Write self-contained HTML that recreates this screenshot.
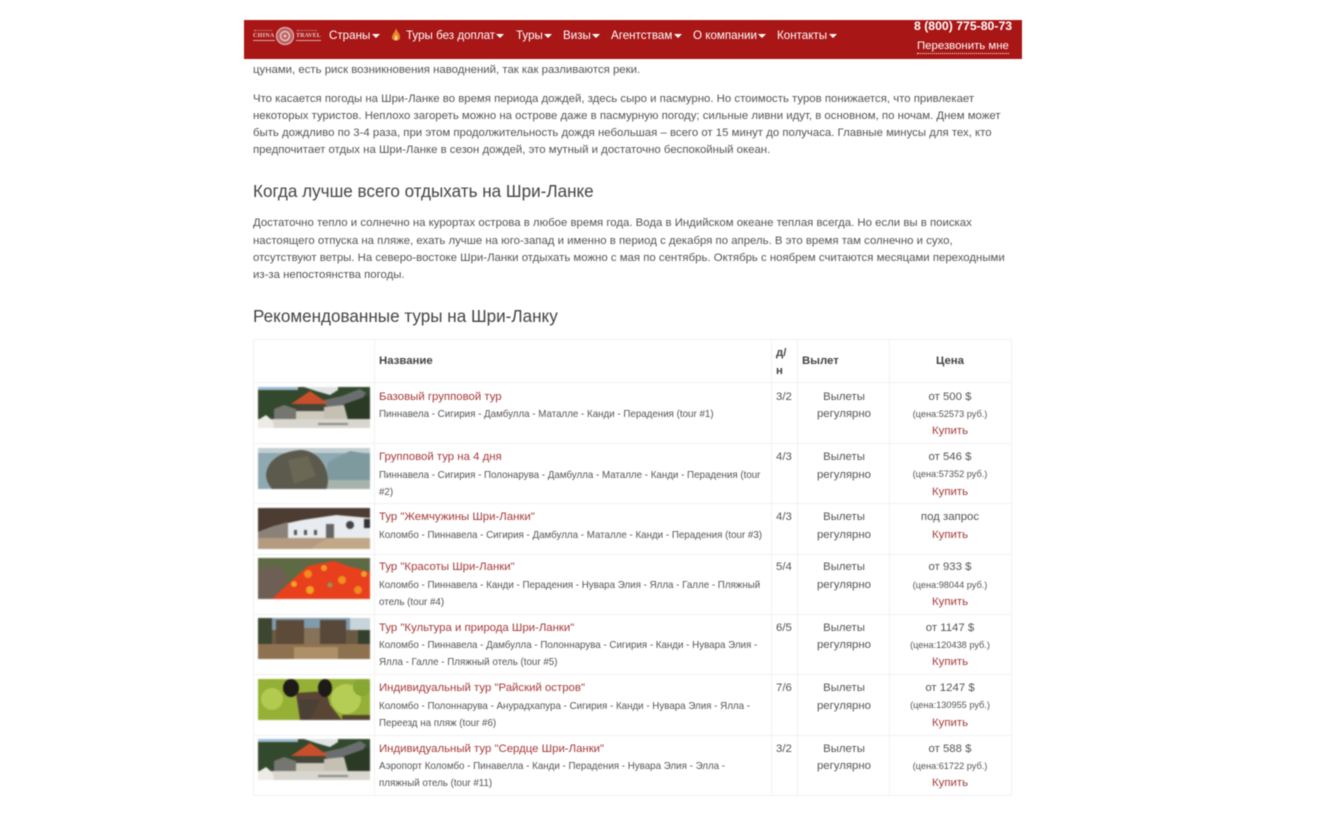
<!DOCTYPE html>
<html lang="ru"><head><meta charset="utf-8"><title>Шри-Ланка</title>
<style>
html,body{margin:0;padding:0;background:#fff}
#p{position:relative;width:1340px;height:818px;overflow:hidden;font-family:"Liberation Sans",sans-serif;color:#555;font-size:11.4px;filter:blur(.45px)}
.t{position:absolute;white-space:nowrap;line-height:18px;margin-top:1px}
.h{font-size:17.1px;color:#444;margin-top:0}
.s{font-size:9.78px}
.a{color:#a5393a}
.c{transform:translateX(-50%)}
.b{font-weight:bold;color:#444;font-size:11.4px}
.m{font-size:9.2px;margin-top:0}
.n{color:#fff;font-size:11.6px;top:26px}
.k{position:absolute;top:34px;width:0;height:0;border:4px solid transparent;border-top-color:#fff;border-bottom:0}
.l{position:absolute;background:#f2f2f2}
svg.i{position:absolute;left:258px;width:112px;height:41px;filter:blur(.4px)}
</style></head><body><div id="p">
<div style="position:absolute;left:244px;top:20px;width:778px;height:39px;background:#a81616"></div>
<div style="position:absolute;left:254px;top:30px;width:18px;height:1px;border-top:1px dotted #d8a8a8"></div>
<div style="position:absolute;left:297px;top:30px;width:20px;height:1px;border-top:1px dotted #d8a8a8"></div>
<div class="t" style="left:253px;top:33px;margin-top:0;color:#e8cfcf;font:bold 6px/7px 'Liberation Serif',serif;letter-spacing:.3px;border-bottom:1px solid #d8a8a8">CHINA</div>
<div class="t" style="left:296px;top:33px;margin-top:0;color:#e8cfcf;font:bold 6px/7px 'Liberation Serif',serif;letter-spacing:.1px;border-bottom:1px solid #d8a8a8">TRAVEL</div>
<svg style="position:absolute;left:275px;top:26px" width="20" height="20"><circle cx="10" cy="10" r="8.500" fill="#bd6060" stroke="#dcaeae" stroke-width="1.300"/><circle cx="10" cy="10" r="4.500" fill="none" stroke="#e6c6c0" stroke-width="1.500"/><circle cx="10" cy="10" r="1.500" fill="#e6c6c0"/></svg>
<div class="t n" style="left:329px">Страны</div><i class="k" style="left:372px"></i>
<svg style="position:absolute;left:391px;top:28px" width="10" height="14"><path d="M5 0C5.500 3 9.500 5.500 9 10C8.500 13.500 1.500 13.500 1 10C.5 6.500 3.500 5.500 5 0Z" fill="#e8842a"/><path d="M5 6.500C6 8.500 6.800 9.500 6.300 11.200C5.800 12.500 4 12.500 3.700 11.200C3.300 9.500 4.500 8.500 5 6.500Z" fill="#fbe39a"/></svg>
<div class="t n" style="left:406px">Туры без доплат</div><i class="k" style="left:496px"></i>
<div class="t n" style="left:516px">Туры</div><i class="k" style="left:544px"></i>
<div class="t n" style="left:563px">Визы</div><i class="k" style="left:592px"></i>
<div class="t n" style="left:611px">Агентствам</div><i class="k" style="left:674px"></i>
<div class="t n" style="left:693px">О компании</div><i class="k" style="left:758px"></i>
<div class="t n" style="left:777px">Контакты</div><i class="k" style="left:829px"></i>
<div class="t" style="left:914px;top:17px;margin-top:0;color:#fff;font-weight:bold;font-size:12.250px">8 (800) 775-80-73</div>
<div class="t" style="left:917px;top:37px;color:#fff;font-size:11.400px;border-bottom:1px dotted #fff;line-height:14px;padding-top:1px">Перезвонить мне</div>

<div class="t" style="left:253px;top:60px">цунами, есть риск возникновения наводнений, так как разливаются реки.</div>
<div class="t" style="left:253px;top:89px">Что касается погоды на Шри-Ланке во время периода дождей, здесь сыро и пасмурно. Но стоимость туров понижается, что привлекает</div>
<div class="t" style="left:253px;top:106px">некоторых туристов. Неплохо загореть можно на острове даже в пасмурную погоду; сильные ливни идут, в основном, по ночам. Днем может</div>
<div class="t" style="left:253px;top:123px">быть дождливо по 3-4 раза, при этом продолжительность дождя небольшая – всего от 15 минут до получаса. Главные минусы для тех, кто</div>
<div class="t" style="left:253px;top:140px">предпочитает отдых на Шри-Ланке в сезон дождей, это мутный и достаточно беспокойный океан.</div>
<div class="t h" style="left:253px;top:183px">Когда лучше всего отдыхать на Шри-Ланке</div>
<div class="t" style="left:253px;top:213px">Достаточно тепло и солнечно на курортах острова в любое время года. Вода в Индийском океане теплая всегда. Но если вы в поисках</div>
<div class="t" style="left:253px;top:231px">настоящего отпуска на пляже, ехать лучше на юго-запад и именно в период с декабря по апрель. В это время там солнечно и сухо,</div>
<div class="t" style="left:253px;top:248px">отсутствуют ветры. На северо-востоке Шри-Ланки отдыхать можно с мая по сентябрь. Октябрь с ноябрем считаются месяцами переходными</div>
<div class="t" style="left:253px;top:265px">из-за непостоянства погоды.</div>
<div class="t h" style="left:253px;top:308px">Рекомендованные туры на Шри-Ланку</div>

<!-- table lines -->
<div class="l" style="left:253px;top:339px;width:758px;height:1px"></div>
<div class="l" style="left:253px;top:382px;width:758px;height:1px"></div>
<div class="l" style="left:253px;top:443px;width:758px;height:1px"></div>
<div class="l" style="left:253px;top:503px;width:758px;height:1px"></div>
<div class="l" style="left:253px;top:554px;width:758px;height:1px"></div>
<div class="l" style="left:253px;top:614px;width:758px;height:1px"></div>
<div class="l" style="left:253px;top:674px;width:758px;height:1px"></div>
<div class="l" style="left:253px;top:735px;width:758px;height:1px"></div>
<div class="l" style="left:253px;top:795px;width:758px;height:1px"></div>
<div class="l" style="left:253px;top:339px;width:1px;height:457px"></div>
<div class="l" style="left:374px;top:339px;width:1px;height:457px"></div>
<div class="l" style="left:771px;top:339px;width:1px;height:457px"></div>
<div class="l" style="left:797px;top:339px;width:1px;height:457px"></div>
<div class="l" style="left:889px;top:339px;width:1px;height:457px"></div>
<div class="l" style="left:1011px;top:339px;width:1px;height:457px"></div>

<div class="t b" style="left:379px;top:351px">Название</div>
<div class="t b" style="left:776px;top:343px">д/</div>
<div class="t b" style="left:776px;top:361px">н</div>
<div class="t b" style="left:802px;top:351px">Вылет</div>
<div class="t b c" style="left:950px;top:351px">Цена</div>

<svg width="0" height="0" style="position:absolute"><defs>
<symbol id="temple" viewBox="0 0 112 41"><rect width="112" height="41" fill="#33492d"/><rect width="40" height="3" fill="#9dbbd2"/><path d="M46 0H80V3L72 8L58 4Z" fill="#dfe3e4"/><path d="M62 14L84 9L102 2L108 6L104 12L88 20L70 20Z" fill="#6a6e70"/><path d="M84 18L112 8V34H88Z" fill="#2a3a25"/><path d="M66 20L86 18L90 33H66Z" fill="#c4c0b4"/><path d="M16 22L26 18L38 22V32H16Z" fill="#74766f"/><path d="M33 17L52 4L71 17Z" fill="#c94f2a"/><rect x="38" y="17" width="28" height="7" fill="#45453a"/><rect x="38" y="24" width="28" height="9" fill="#cdc9bb"/><rect x="0" y="32" width="112" height="9" fill="#d8d6ce"/><rect x="60" y="36" width="30" height="2" fill="#8c8b84"/><path d="M0 41V33L8 28L15 34L16 41Z" fill="#ecebe5"/></symbol>
<symbol id="rock" viewBox="0 0 112 41"><rect width="112" height="41" fill="#8fa9b3"/><rect width="112" height="5" fill="#c2cfd2"/><path d="M66 42L70 14L92 3L112 6V41Z" fill="#7f9a9f"/><path d="M70 32H112V41H70Z" fill="#a6b3ac"/><path d="M8 26C10 12 22 4 42 2C60 2 70 18 70 34L68 41H14C10 36 8 32 8 26Z" fill="#5c5a4c"/><path d="M30 12L50 8L58 28L36 36Z" fill="#6a6755"/></symbol>
<symbol id="cave" viewBox="0 0 112 41"><rect width="112" height="41" fill="#e8ebef"/><path d="M0 0H112V10L78 7L44 12L16 18L0 24Z" fill="#4c3c32"/><path d="M0 24L16 18L30 14V30H0Z" fill="#8a8278"/><rect y="30" width="112" height="11" fill="#b49b80"/><rect x="68" y="16" width="8" height="14" fill="#666"/><circle cx="92" cy="17" r="4" fill="#444"/><rect x="106" y="11" width="6" height="9" fill="#333"/><rect x="36" y="22" width="3" height="5" fill="#555"/><rect x="46" y="22" width="3" height="5" fill="#555"/><rect x="56" y="22" width="3" height="5" fill="#555"/><path d="M52 41L70 30H112V41Z" fill="#c2a888"/></symbol>
<symbol id="flower" viewBox="0 0 112 41"><rect width="112" height="41" fill="#5d6a44"/><path d="M0 10L24 8L30 22L16 41H0Z" fill="#6e5f55"/><path d="M14 41L34 22L50 8L76 3L90 8L112 14V41Z" fill="#e8401c"/><circle cx="50" cy="16" r="4" fill="#f28a1e"/><circle cx="66" cy="10" r="3" fill="#f3a02a"/><circle cx="84" cy="22" r="4" fill="#f09020"/><circle cx="100" cy="32" r="4" fill="#ef8a20"/><circle cx="52" cy="32" r="4" fill="#f0a020"/><circle cx="36" cy="26" r="3" fill="#f3a02a"/><circle cx="72" cy="27" r="2.500" fill="#8a9a58"/><circle cx="106" cy="16" r="3" fill="#e8a030"/></symbol>
<symbol id="ruin" viewBox="0 0 112 41"><rect width="112" height="41" fill="#6a5a42"/><rect width="112" height="12" fill="#7f9bae"/><rect x="92" width="20" height="12" fill="#c8d4da"/><rect x="18" y="2" width="28" height="24" fill="#5d4a38"/><rect x="62" y="2" width="26" height="24" fill="#58483a"/><rect x="46" y="10" width="16" height="16" fill="#857258"/><rect y="26" width="112" height="15" fill="#8e7250"/><rect x="36" y="29" width="44" height="12" fill="#ae9068"/><rect width="14" height="26" fill="#3d4630"/><rect x="100" y="12" width="12" height="14" fill="#35402c"/></symbol>
<symbol id="deer" viewBox="0 0 112 41"><rect width="112" height="41" fill="#94b035"/><circle cx="14" cy="20" r="11" fill="#b2ca50"/><circle cx="88" cy="20" r="15" fill="#b5cc55"/><circle cx="104" cy="8" r="9" fill="#87a632"/><path d="M38 14L68 12L72 26L84 41H42L40 28Z" fill="#5a4534"/><path d="M40 20H62L58 30L52 41H44Z" fill="#4a4036"/><ellipse cx="33" cy="9" rx="8" ry="9" fill="#1f1a17"/><ellipse cx="67" cy="9" rx="7" ry="9" fill="#1f1a17"/><rect x="84" y="36" width="28" height="5" fill="#55452f"/></symbol>
</defs></svg>

<svg class="i" style="top:387px"><use href="#temple"/></svg>
<svg class="i" style="top:448px"><use href="#rock"/></svg>
<svg class="i" style="top:508px"><use href="#cave"/></svg>
<svg class="i" style="top:558px"><use href="#flower"/></svg>
<svg class="i" style="top:618px"><use href="#ruin"/></svg>
<svg class="i" style="top:679px"><use href="#deer"/></svg>
<svg class="i" style="top:739px"><use href="#temple"/></svg>

<!-- row 1 -->
<div class="t a" style="left:379px;top:387px">Базовый групповой тур</div>
<div class="t s" style="left:379px;top:405px">Пиннавела - Сигирия - Дамбулла - Маталле - Канди - Перадения (tour #1)</div>
<div class="t" style="left:776px;top:387px">3/2</div>
<div class="t c" style="left:844px;top:387px">Вылеты</div><div class="t c" style="left:844px;top:404px">регулярно</div>
<div class="t c" style="left:950px;top:387px">от 500 $</div><div class="t c m" style="left:950px;top:405px">(цена:52573 руб.)</div><div class="t c a" style="left:950px;top:421px">Купить</div>
<!-- row 2 -->
<div class="t a" style="left:379px;top:447px">Групповой тур на 4 дня</div>
<div class="t s" style="left:379px;top:466px">Пиннавела - Сигирия - Полонарува - Дамбулла - Маталле - Канди - Перадения (tour</div>
<div class="t s" style="left:379px;top:483px">#2)</div>
<div class="t" style="left:776px;top:447px">4/3</div>
<div class="t c" style="left:844px;top:447px">Вылеты</div><div class="t c" style="left:844px;top:465px">регулярно</div>
<div class="t c" style="left:950px;top:447px">от 546 $</div><div class="t c m" style="left:950px;top:465px">(цена:57352 руб.)</div><div class="t c a" style="left:950px;top:482px">Купить</div>
<!-- row 3 -->
<div class="t a" style="left:379px;top:507px">Тур "Жемчужины Шри-Ланки"</div>
<div class="t s" style="left:379px;top:526px">Коломбо - Пиннавела - Сигирия - Дамбулла - Маталле - Канди - Перадения (tour #3)</div>
<div class="t" style="left:776px;top:507px">4/3</div>
<div class="t c" style="left:844px;top:507px">Вылеты</div><div class="t c" style="left:844px;top:525px">регулярно</div>
<div class="t c" style="left:950px;top:507px">под запрос</div><div class="t c a" style="left:950px;top:525px">Купить</div>
<!-- row 4 -->
<div class="t a" style="left:379px;top:557px">Тур "Красоты Шри-Ланки"</div>
<div class="t s" style="left:379px;top:576px">Коломбо - Пиннавела - Канди - Перадения - Нувара Элия - Ялла - Галле - Пляжный</div>
<div class="t s" style="left:379px;top:593px">отель (tour #4)</div>
<div class="t" style="left:776px;top:557px">5/4</div>
<div class="t c" style="left:844px;top:557px">Вылеты</div><div class="t c" style="left:844px;top:575px">регулярно</div>
<div class="t c" style="left:950px;top:557px">от 933 $</div><div class="t c m" style="left:950px;top:576px">(цена:98044 руб.)</div><div class="t c a" style="left:950px;top:592px">Купить</div>
<!-- row 5 -->
<div class="t a" style="left:379px;top:618px">Тур "Культура и природа Шри-Ланки"</div>
<div class="t s" style="left:379px;top:636px">Коломбо - Пиннавела - Дамбулла - Полоннарува - Сигирия - Канди - Нувара Элия -</div>
<div class="t s" style="left:379px;top:653px">Ялла - Галле - Пляжный отель (tour #5)</div>
<div class="t" style="left:776px;top:618px">6/5</div>
<div class="t c" style="left:844px;top:618px">Вылеты</div><div class="t c" style="left:844px;top:635px">регулярно</div>
<div class="t c" style="left:950px;top:618px">от 1147 $</div><div class="t c m" style="left:950px;top:636px">(цена:120438 руб.)</div><div class="t c a" style="left:950px;top:652px">Купить</div>
<!-- row 6 -->
<div class="t a" style="left:379px;top:678px">Индивидуальный тур "Райский остров"</div>
<div class="t s" style="left:379px;top:697px">Коломбо - Полоннарува - Анурадхапура - Сигирия - Канди - Нувара Элия - Ялла -</div>
<div class="t s" style="left:379px;top:714px">Переезд на пляж (tour #6)</div>
<div class="t" style="left:776px;top:678px">7/6</div>
<div class="t c" style="left:844px;top:678px">Вылеты</div><div class="t c" style="left:844px;top:696px">регулярно</div>
<div class="t c" style="left:950px;top:678px">от 1247 $</div><div class="t c m" style="left:950px;top:696px">(цена:130955 руб.)</div><div class="t c a" style="left:950px;top:713px">Купить</div>
<!-- row 7 -->
<div class="t a" style="left:379px;top:739px">Индивидуальный тур "Сердце Шри-Ланки"</div>
<div class="t s" style="left:379px;top:757px">Аэропорт Коломбо - Пинавелла - Канди - Перадения - Нувара Элия - Элла -</div>
<div class="t s" style="left:379px;top:774px">пляжный отель (tour #11)</div>
<div class="t" style="left:776px;top:739px">3/2</div>
<div class="t c" style="left:844px;top:739px">Вылеты</div><div class="t c" style="left:844px;top:756px">регулярно</div>
<div class="t c" style="left:950px;top:739px">от 588 $</div><div class="t c m" style="left:950px;top:757px">(цена:61722 руб.)</div><div class="t c a" style="left:950px;top:773px">Купить</div>
</div></body></html>
